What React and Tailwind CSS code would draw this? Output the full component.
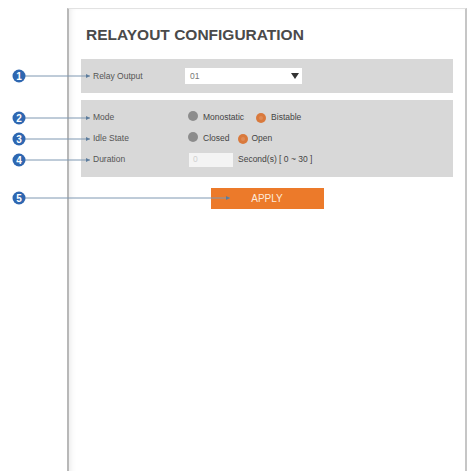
import React from 'react';

const callouts = [
  { n: 1, y: 76, x2: 90 },
  { n: 2, y: 118, x2: 90 },
  { n: 3, y: 139, x2: 90 },
  { n: 4, y: 160, x2: 90 },
  { n: 5, y: 198, x2: 230 },
];

const Radio = ({ on }) => (
  <span
    className={`inline-flex items-center justify-center w-[10px] h-[10px] rounded-full ${on ? 'bg-[#d9793c]' : 'bg-[#8c8c8c]'}`}
  >
    {on && <span className="w-[4px] h-[4px] rounded-full bg-[#df8b55]" />}
  </span>
);

const Row = ({ label, children }) => (
  <div className="flex items-center h-[21px]">
    <div className="w-[104px] pl-[12px] text-[8.5px] text-[#555]">{label}</div>
    <div className="flex items-center text-[8.5px] text-[#444]">{children}</div>
  </div>
);

const App = () => {
  return (
    <div className="relative w-[470px] h-[471px] overflow-hidden bg-white font-['Liberation_Sans',Arial,sans-serif]">
      <div className="ml-[67px] mt-[8px] w-[400px] h-[480px] border-l-2 border-r-2 border-t border-l-[#b8b8b8] border-r-[#c6c6c6] border-t-[#e2e2e2] px-[12px] pt-[17px] shadow-[inset_5px_0_6px_-4px_#e6e6e6]">
        <h1 className="pl-[5px] text-[15.5px] leading-[18px] font-bold text-[#4a4a4a]">
          RELAYOUT CONFIGURATION
        </h1>

        <div className="mt-[15px] h-[34px] bg-[#d8d8d8] flex items-center">
          <div className="w-[104px] pl-[12px] text-[8.5px] text-[#555]">Relay Output</div>
          <div className="w-[117px] h-[16px] bg-white flex items-center justify-between pl-[5px] pr-[3px]">
            <span className="text-[8.5px] text-[#777]">01</span>
            <span className="w-0 h-0 border-l-[4px] border-r-[4px] border-t-[6px] border-l-transparent border-r-transparent border-t-[#333]" />
          </div>
        </div>

        <div className="mt-[7px] py-[7px] bg-[#d8d8d8]">
          <Row label="Mode">
            <span className="ml-[3px]"><Radio /></span>
            <span className="ml-[5px] mr-[12px]">Monostatic</span>
            <Radio on />
            <span className="ml-[5px]">Bistable</span>
          </Row>
          <Row label="Idle State">
            <span className="ml-[3px]"><Radio /></span>
            <span className="ml-[5px] mr-[9px]">Closed</span>
            <Radio on />
            <span className="ml-[3px]">Open</span>
          </Row>
          <Row label="Duration">
            <div className="ml-[4px] w-[44px] h-[14px] bg-[#f4f4f4] flex items-center pl-[4px] text-[#d0d0d0]">0</div>
            <span className="ml-[5px]">Second(s) [ 0 ~ 30 ]</span>
          </Row>
        </div>

        <div className="mt-[11px] flex justify-center">
          <button className="w-[113px] h-[21px] bg-[#ec7a2a] text-[10px] text-[#fde9da]">APPLY</button>
        </div>
      </div>

      <svg className="absolute inset-0" width="470" height="471" viewBox="0 0 470 471">
        {callouts.map((c) => (
          <g key={c.n}>
            <line x1="25" y1={c.y} x2={c.x2} y2={c.y} stroke="#7f98b2" strokeWidth="1" />
            <path d={`M${c.x2 - 4} ${c.y - 2} L${c.x2} ${c.y} L${c.x2 - 4} ${c.y + 2} Z`} fill="#5d7c9c" />
            <circle cx="19" cy={c.y} r="6.5" fill="#2e67b1" />
            <text
              x="19"
              y={c.y + 3.5}
              textAnchor="middle"
              fontSize="10"
              fontWeight="bold"
              fill="#ffffff"
              fontFamily="Liberation Sans, Arial, sans-serif"
            >
              {c.n}
            </text>
          </g>
        ))}
      </svg>
    </div>
  );
};

export default App;
